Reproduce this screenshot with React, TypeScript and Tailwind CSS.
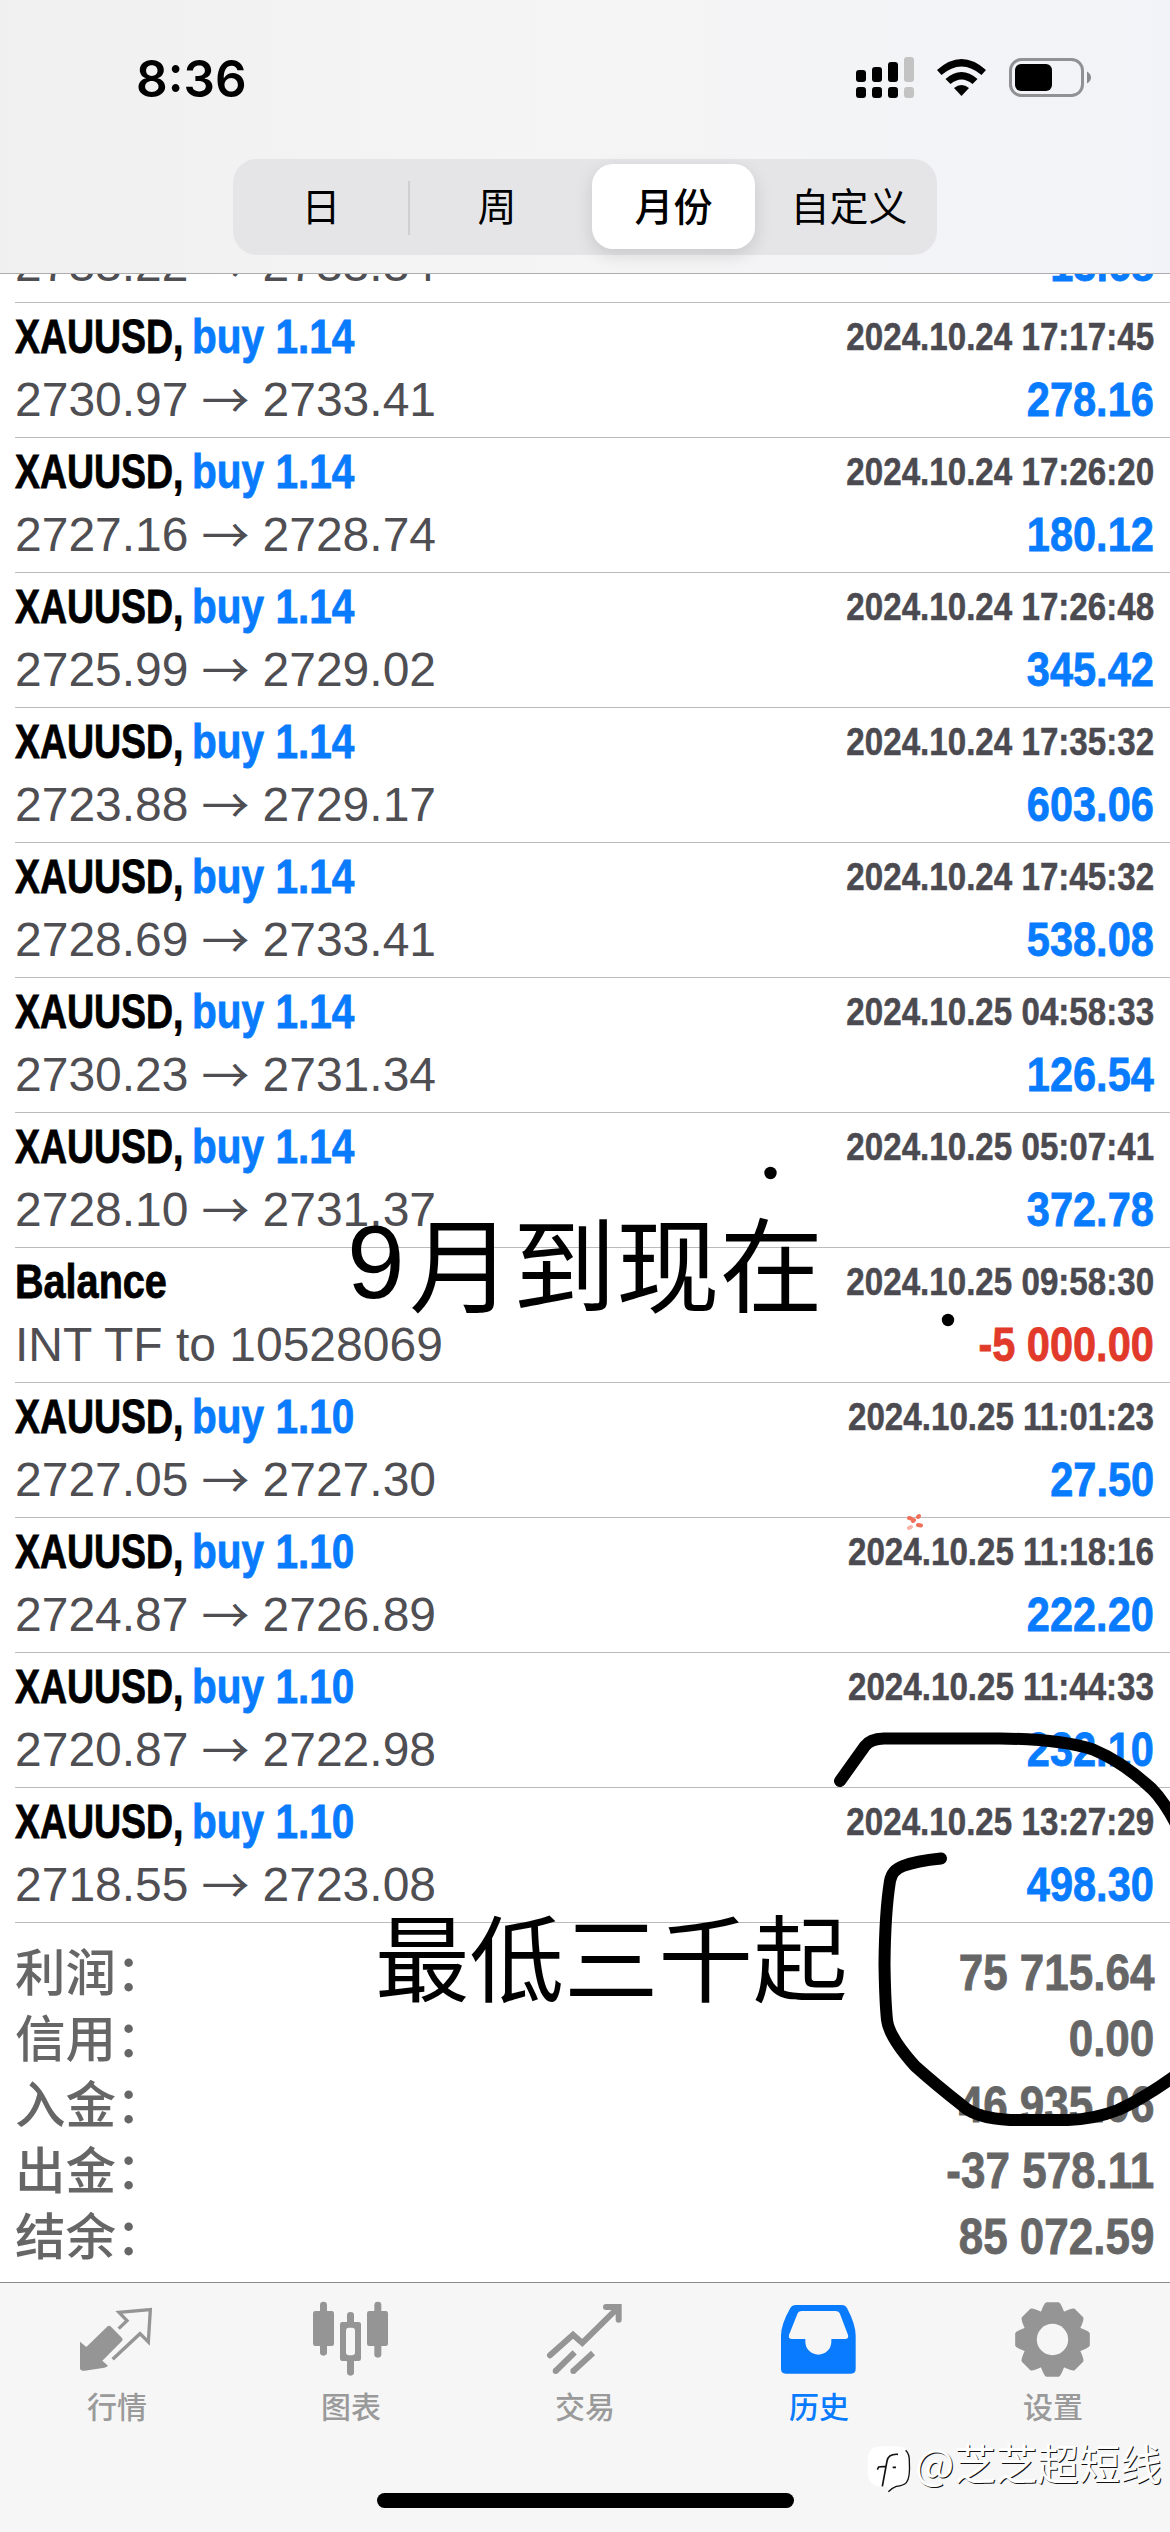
import * as React from 'react';

type Deal = {
  symbol: string;
  volume?: string;
  time: string;
  from?: string;
  to?: string;
  note?: string;
  profit: string;
};

// the row that is scrolled halfway under the header
const scrolledDeal = { from: '2733.22', to: '2733.34', profit: '13.68' };

const deals: Deal[] = [
  { symbol: 'XAUUSD', volume: 'buy 1.14', time: '2024.10.24 17:17:45', from: '2730.97', to: '2733.41', profit: '278.16' },
  { symbol: 'XAUUSD', volume: 'buy 1.14', time: '2024.10.24 17:26:20', from: '2727.16', to: '2728.74', profit: '180.12' },
  { symbol: 'XAUUSD', volume: 'buy 1.14', time: '2024.10.24 17:26:48', from: '2725.99', to: '2729.02', profit: '345.42' },
  { symbol: 'XAUUSD', volume: 'buy 1.14', time: '2024.10.24 17:35:32', from: '2723.88', to: '2729.17', profit: '603.06' },
  { symbol: 'XAUUSD', volume: 'buy 1.14', time: '2024.10.24 17:45:32', from: '2728.69', to: '2733.41', profit: '538.08' },
  { symbol: 'XAUUSD', volume: 'buy 1.14', time: '2024.10.25 04:58:33', from: '2730.23', to: '2731.34', profit: '126.54' },
  { symbol: 'XAUUSD', volume: 'buy 1.14', time: '2024.10.25 05:07:41', from: '2728.10', to: '2731.37', profit: '372.78' },
  { symbol: 'Balance', time: '2024.10.25 09:58:30', note: 'INT TF to 10528069', profit: '-5 000.00' },
  { symbol: 'XAUUSD', volume: 'buy 1.10', time: '2024.10.25 11:01:23', from: '2727.05', to: '2727.30', profit: '27.50' },
  { symbol: 'XAUUSD', volume: 'buy 1.10', time: '2024.10.25 11:18:16', from: '2724.87', to: '2726.89', profit: '222.20' },
  { symbol: 'XAUUSD', volume: 'buy 1.10', time: '2024.10.25 11:44:33', from: '2720.87', to: '2722.98', profit: '232.10' },
  { symbol: 'XAUUSD', volume: 'buy 1.10', time: '2024.10.25 13:27:29', from: '2718.55', to: '2723.08', profit: '498.30' },
];

const totals = [
  ['利润：', '75 715.64'],
  ['信用：', '0.00'],
  ['入金：', '46 935.06'],
  ['出金：', '-37 578.11'],
  ['结余：', '85 072.59'],
];

const StatusBar: React.FC = () => (
  <div className="flex h-[159px] items-start justify-between pl-[136px] pr-[78px]">
    <span className="mt-[49px] origin-left scale-x-[0.97] font-['Inter'] text-[51px] leading-[60px] font-semibold text-black">
      8:36
    </span>
    <svg className="mt-[56px]" width="236" height="43" viewBox="856 56 236 43">
      <g fill="#000">
        <rect x="856" y="70" width="10" height="12" rx="3" />
        <rect x="872" y="67" width="10" height="15" rx="3" />
        <rect x="888" y="62" width="10" height="20" rx="3" />
        <rect x="856" y="87" width="10" height="11" rx="3" />
        <rect x="872" y="87" width="10" height="11" rx="3" />
        <rect x="888" y="87" width="10" height="11" rx="3" />
      </g>
      <rect x="904" y="57" width="10" height="25" rx="3" fill="#c3c3c4" />
      <rect x="904" y="87" width="10" height="11" rx="3" fill="#c3c3c4" />
      <path d="M937 70 Q961.500 48 986 70 L981.500 75 Q961.500 58 941.500 75 Z" fill="#000" />
      <path d="M945.500 79 Q961.500 65 977.500 79 L972.500 84 Q961.500 75 950.500 84 Z" fill="#000" />
      <path d="M954 88 Q961.500 82 969 88 L961.500 96 Z" fill="#000" />
      <rect x="1010.500" y="59.500" width="72" height="36" rx="11" fill="none" stroke="#919193" strokeWidth="3" />
      <rect x="1015" y="64" width="37" height="27" rx="6" fill="#000" />
      <path d="M1087 71.500 Q1091 74 1091 77.500 Q1091 81 1087 83.500 Z" fill="#8a8a8c" />
    </svg>
  </div>
);

const Segments: React.FC = () => (
  <div className="mx-auto grid h-[96px] w-[704px] grid-cols-4 rounded-[24px] bg-[#e5e5e7] text-[39px] leading-[97px] text-black">
    <div className="relative text-center">
      日
      <span className="absolute top-[22px] -right-px h-[54px] w-[2px] bg-[#cfcfd2]" />
    </div>
    <div className="text-center">周</div>
    <div className="py-[5px] pr-[6px] pl-[7px]">
      <div className="h-[85px] rounded-[21px] bg-white text-center leading-[87px] font-medium shadow-[0_6px_18px_rgba(0,0,0,0.13)]">
        月份
      </div>
    </div>
    <div className="text-center">自定义</div>
  </div>
);

const Prices: React.FC<{ from?: string; to?: string }> = ({ from, to }) => (
  <span className="flex text-[#4f4e53]">
    {from}
    <span className="mx-[13px] -mt-[3px] h-[60px] w-[48px] font-['Noto_Sans_CJK_SC']">→</span>
    {to}
  </span>
);

const Profit: React.FC<{ value: string }> = ({ value }) => (
  <span
    className={`origin-right scale-x-[0.865] font-bold [-webkit-text-stroke:0.8px] ${value.startsWith('-') ? 'text-[#e23a2a]' : 'text-[#087bfe]'}`}
  >
    {value}
  </span>
);

const DealRow: React.FC<{ deal: Deal }> = ({ deal }) => (
  <div className="ml-[15px] h-[135px] shrink-0 border-b border-[#bcbcbe] pt-[4px] pr-[16px] text-[48px] leading-[60px]">
    <div className="flex items-start justify-between">
      {deal.volume ? (
        <div className="flex font-bold whitespace-nowrap [-webkit-text-stroke:0.8px]">
          <span className="w-[177px] origin-left scale-x-[0.78] text-black">{deal.symbol},</span>
          <span className="origin-left scale-x-[0.845] text-[#087bfe]">{deal.volume}</span>
        </div>
      ) : (
        <span className="origin-left scale-x-[0.825] font-bold text-black [-webkit-text-stroke:0.8px]">{deal.symbol}</span>
      )}
      <span className="origin-right scale-x-[0.85] text-[39px] leading-[59px] font-bold text-[#4b4a50] [-webkit-text-stroke:0.5px]">
        {deal.time}
      </span>
    </div>
    <div className="mt-[3px] flex items-start justify-between">
      {deal.note ? <span className="text-[#4f4e53]">{deal.note}</span> : <Prices from={deal.from} to={deal.to} />}
      <Profit value={deal.profit} />
    </div>
  </div>
);

const Summary: React.FC = () => (
  <div className="flex flex-col pt-[15px] pr-[16px] pl-[15px] text-[#666667]">
    {totals.map(([label, value]) => (
      <div key={label} className="flex h-[66px] items-start justify-between">
        <span className="font-['Noto_Sans_CJK_SC'] text-[50.500px] leading-[63px] font-medium">{label}</span>
        <span className="origin-right scale-x-[0.88] text-[50px] leading-[70px] font-bold [-webkit-text-stroke:0.8px]">
          {value}
        </span>
      </div>
    ))}
  </div>
);

const QuotesIcon = () => (
  <svg width="78" height="78" viewBox="54 45 234 234">
    <path
      d="M60 170 L79 186 L143 124 Q149 120 153 125 L186 159 Q190 164 186 168 L127 227 L144 242 Q140 246 133 248 L74 257 Q60 259 60 249 Z"
      fill="#959595"
    />
    <path
      d="M158 223 L240 146 L265 171 L271 74 L177 82 L201 107 L176 131"
      fill="none"
      stroke="#959595"
      strokeWidth="10"
    />
  </svg>
);

const ChartIcon = () => (
  <svg width="78" height="78" viewBox="756 45 234 234">
    <g fill="#959595">
      <rect x="780" y="50" width="21" height="162" rx="10" />
      <rect x="759" y="78" width="63" height="105" rx="7" />
      <rect x="861" y="81" width="21" height="191" rx="10" />
      <rect x="840" y="111" width="63" height="117" rx="7" />
      <rect x="943" y="50" width="21" height="168" rx="10" />
      <rect x="921" y="78" width="63" height="105" rx="7" />
    </g>
    <rect x="858" y="128" width="27" height="83" rx="9" fill="#f6f6f6" />
  </svg>
);

const TradeIcon = () => (
  <svg width="78" height="78" viewBox="78 45 234 234">
    <g fill="none" stroke="#959595" strokeWidth="18">
      <path d="M90 211 L159 149 L187 174 L292 70" strokeLinecap="round" />
      <path d="M258 66 H296 V104" strokeLinecap="round" />
      <path d="M107 258 L164 202" />
      <path d="M160 258 L219 204" />
    </g>
    <circle cx="107" cy="258" r="9" fill="#959595" />
    <circle cx="160" cy="258" r="9" fill="#959595" />
  </svg>
);

const HistoryIcon = () => (
  <svg width="78" height="78" viewBox="780 45 234 234">
    <path
      fillRule="evenodd"
      fill="#087bfe"
      d="M828 60 H966 Q976 60 981 69 Q1007 118 1007 152 V252 Q1007 266 993 266 H797 Q783 266 783 252 V152 Q783 118 811 69 Q816 60 828 60 Z M846 78 Q835 78 832 87 L807 150 Q804 162 816 162 H856 V170 A39 39 0 0 0 934 170 V162 H975 Q987 162 984 150 L960 87 Q957 78 946 78 Z"
    />
  </svg>
);

const SettingsIcon = () => (
  <svg width="78" height="78" viewBox="462 30 234 234">
    <g transform="translate(577.5 148.5)">
      <circle r="84" fill="#959595" />
      {[0, 45, 90, 135, 180, 225, 270, 315].map((angle) => (
        <path
          key={angle}
          transform={`rotate(${angle})`}
          d="M-17 -106 H17 Q21 -104 31 -76 H-31 Q-21 -104 -17 -106 Z"
          fill="#959595"
          stroke="#959595"
          strokeWidth="12"
          strokeLinejoin="round"
        />
      ))}
      <circle r="47" fill="#f6f6f6" />
    </g>
  </svg>
);

const tabs = [
  { label: '行情', icon: <QuotesIcon /> },
  { label: '图表', icon: <ChartIcon /> },
  { label: '交易', icon: <TradeIcon /> },
  { label: '历史', icon: <HistoryIcon />, active: true },
  { label: '设置', icon: <SettingsIcon /> },
];

const TabBar: React.FC = () => (
  <div className="flex h-[250px] flex-col justify-between border-t border-[#8c8c8e] bg-[#f6f6f6]">
    <div className="grid grid-cols-5 pt-[17px]">
      {tabs.map((tab) => (
        <div key={tab.label} className="flex flex-col items-center">
          {tab.icon}
          <span
            className={`mt-[5px] font-['Noto_Sans_CJK_SC'] text-[30px] leading-[44px] font-medium ${tab.active ? 'text-[#087bfe]' : 'text-[#9a9a9a]'}`}
          >
            {tab.label}
          </span>
        </div>
      ))}
    </div>
    <div className="mx-auto mb-[24px] h-[15px] w-[417px] rounded-full bg-black" />
  </div>
);

// hand drawn marks lying over the list
const Doodles: React.FC = () => (
  <svg className="absolute inset-0" width="1170" height="2532" viewBox="0 0 1170 2532">
    <circle cx="770.500" cy="1173" r="6.200" />
    <circle cx="948" cy="1320" r="6.200" />
    <g fill="none" stroke="#000" strokeWidth="12" strokeLinecap="round" strokeLinejoin="round">
      <path d="M840 1781 L865 1746 Q870 1739 884 1738.500 H1000 Q1060 1739 1093 1749.500 Q1123 1762 1152 1789 Q1164 1801 1176 1824" />
      <path d="M941 1858.500 Q916 1861 903 1866 Q892 1870 890 1881 Q885 1912 884.500 1964 Q885 2000 887 2020 Q889 2037 915 2066 Q935 2084 963 2106 Q976 2118 1010 2120 H1068 Q1095 2119 1118 2110 Q1146 2097 1176 2075" />
    </g>
    <g fill="none" strokeLinecap="round" strokeWidth="4">
      <path d="M909 1518 L911 1518.500 M919 1516 L918 1517 M914 1520 L913 1521 M918 1525 L921 1525.500" stroke="#f2705a" />
      <path d="M909 1528 L911 1527" stroke="#f9b5a8" />
    </g>
  </svg>
);

const Watermark: React.FC = () => (
  <div className="absolute top-[2436px] left-[867px] flex items-start whitespace-nowrap">
    <svg className="mt-[9px]" width="46" height="48" viewBox="20 466 138 144">
      <path
        d="M62 470 H108 Q150 470 148 512 Q150 568 140 580 Q130 590 108 590 Q96 594 84 606 L80 590 H58 Q22 588 22 540 V512 Q22 470 62 470 Z"
        fill="#fff"
      />
      <path d="M136 482 Q148 494 147 515 Q150 566 138 579 Q130 588 108 590 Q96 594 84 606" fill="none" stroke="#111" strokeWidth="4" />
      <path d="M113 494 Q84 492 80 514 L66 590 M51 540 L55 532 L76 530 M97 533 H107" fill="none" stroke="#111" strokeWidth="5" />
    </svg>
    <span className="ml-[2px] font-['Noto_Sans_CJK_SC'] text-[41.500px] leading-[52px] text-white [text-shadow:1px_1px_0_#111]">
      @芝芝超短线
    </span>
  </div>
);

const App: React.FC = () => {
  return (
    <div className="relative flex h-[2532px] w-[1170px] flex-col overflow-hidden bg-white font-['Liberation_Sans','Noto_Sans_CJK_SC',sans-serif]">
      <div className="h-[274px] shrink-0 border-b border-[#adadaf] bg-linear-to-r from-[#f0f0f1] via-[#f5f5f5] to-[#f2f3f8]">
        <StatusBar />
        <Segments />
      </div>
      <div className="h-[2008px] shrink-0">
        <div className="ml-[15px] flex h-[29px] items-end justify-between overflow-hidden border-b border-[#bcbcbe] pr-[16px] pb-[7px] text-[48px] leading-[60px]">
          <Prices from={scrolledDeal.from} to={scrolledDeal.to} />
          <Profit value={scrolledDeal.profit} />
        </div>
        {deals.map((deal) => (
          <DealRow key={deal.time} deal={deal} />
        ))}
        <Summary />
      </div>
      <TabBar />
      <div className="absolute top-[1185px] left-[347px] flex font-['Noto_Sans_CJK_SC'] text-[103.500px] leading-[150px] whitespace-nowrap text-black">
        <span className="mt-[2px] w-[62px] font-['Liberation_Sans']">9</span>
        月到现在
      </div>
      <div className="absolute top-[1879px] left-[375px] font-['Noto_Sans_CJK_SC'] text-[94.500px] leading-[150px] whitespace-nowrap text-black">
        最低三千起
      </div>
      <Doodles />
      <Watermark />
    </div>
  );
};

export default App;
